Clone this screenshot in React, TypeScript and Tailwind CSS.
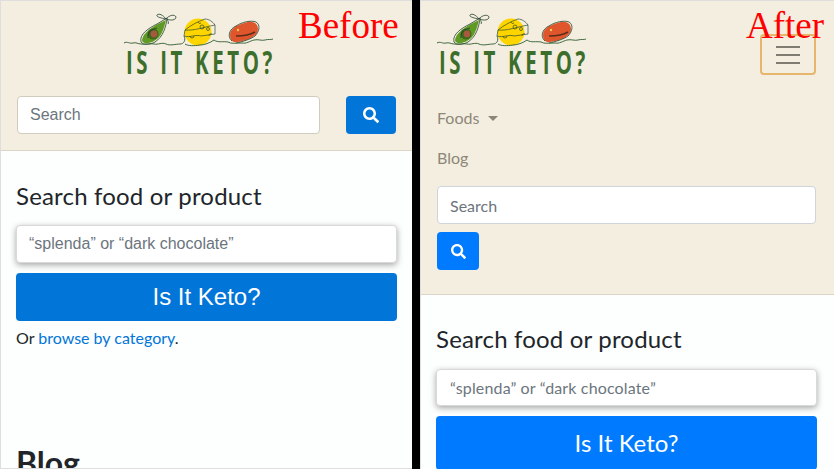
import { FaSearch } from "react-icons/fa";

const Logo = () => {
    return (
        <svg width="152" height="72" viewBox="0 0 152 72" className="block" fill="none">
            {/* avocado */}
            <path d="M18 27 C19 20 27 15 34 11 L42 7 C40 15 38 24 30 28 C25 31 18 31 18 27 Z" fill="#5f9a24" />
            <circle cx="29" cy="21" r="5.5" fill="#3b6a1c" />
            <circle cx="30" cy="21" r="3.4" fill="#a8583c" />
            <path d="M17 29 C15 21 25 15 33 11 L43 5 C42 14 39 24 31 29 C26 32 19 32 17 29 Z" stroke="#22402a" strokeWidth="0.8" />
            <path d="M24 25 C23 19 28 16 33 15 M42 6 C37 5 32 4 33 2 C35 0 39 2 42 6 C45 2 51 1 52 4 C52 7 47 8 43 6 C44 8 45 10 44 11" stroke="#22402a" strokeWidth="0.8" />
            {/* cheese */}
            <circle cx="74" cy="19" r="13.5" fill="#ffd500" />
            <path d="M61 17 L60 23 C66 25 72 21 77 23 L91 21 L91 12 C89 9 85 6 81 6 C75 8 67 12 61 17 Z M61 17 C70 18 80 14 91 12" stroke="#2c4a2c" strokeWidth="0.7" />
            <circle cx="78" cy="14" r="2" stroke="#2c4a2c" strokeWidth="0.7" />
            <circle cx="84" cy="16" r="1.5" stroke="#2c4a2c" strokeWidth="0.7" />
            <path d="M66 23 a2 2 0 0 0 4 0 M85 23 a2 2 0 0 1 3 -2 M74 9 a2 2 0 0 0 3 1" stroke="#2c4a2c" strokeWidth="0.7" />
            {/* steak */}
            <path d="M106 22 C106 14 116 11 124 9 C130 8 134 11 134 16 C134 24 122 28 113 29 C108 30 106 26 106 22 Z" fill="#e0562c" />
            <path d="M112 23 C118 23 126 22 131 19" stroke="#5a2d1a" strokeWidth="1.6" />
            <circle cx="114" cy="17" r="1.2" fill="#f5c84a" />
            <path d="M108 28 C103 24 105 16 112 13 C118 9 127 7 132 9 C137 12 135 19 131 23 C127 26 118 29 112 30" stroke="#22402a" strokeWidth="0.8" />
            {/* line under the food */}
            <path d="M0 30 C3 28 6 31 9 30 C12 29 14 31 17 31 C21 32 26 30 30 31 C34 32 38 29 42 31 C46 33 52 31 56 31 C60 31 62 27 60 23 M90 27 C94 30 99 28 104 29 C107 31 112 30 118 30 C122 31 126 28 130 27 C134 26 138 28 141 27 C144 26 147 27 149 26" stroke="#2c5a2c" strokeWidth="0.9" />
            <path d="M61 31 C64 33 70 33 76 32 C80 32 86 30 90 27" stroke="#2c5a2c" strokeWidth="0.9" />
            <g transform="translate(2 61) scale(0.62 1)">
                <text x="0" y="0" textLength="236" lengthAdjust="spacing" fill="#3d6e2b" fontFamily="'Open Sans', sans-serif" fontWeight="700" fontSize="33">IS IT KETO?</text>
            </g>
        </svg>
    );
};

const App = () => {
    return (
        <div className="flex w-[834px] h-[469px] overflow-hidden bg-black font-['Lato',sans-serif]">
            {/* before */}
            <div className="relative w-[412px] h-full overflow-hidden bg-[#fcfffe] border border-r-0 border-[#dedede]">
                <div className="absolute left-[297px] top-[3px] text-[37px] leading-[44px] text-[#ff0000] font-['Liberation_Serif',serif]">Before</div>
                <header className="h-[150px] bg-[#f4eee1] border-b border-[#dcd6c9]">
                    <div className="flex justify-center pt-[12px] pr-[13px]">
                        <Logo />
                    </div>
                    <div className="flex justify-between pl-[16px] pr-[16px] mt-[11px]">
                        <div className="w-[303px] h-[38px] flex items-center px-[12px] bg-white border border-[#d1cbbd] rounded-[4px] text-[16px] text-[#6c757d] font-['Liberation_Sans',sans-serif]">Search</div>
                        <div className="w-[50px] h-[38px] flex items-center justify-center bg-[#0275d8] rounded-[4px]">
                            <FaSearch size={16} color="#fff" />
                        </div>
                    </div>
                </header>
                <main className="px-[15px]">
                    <h2 className="mt-[28px] text-[24px] leading-[34px] tracking-[0.18px] text-[#212529]">Search food or product</h2>
                    <div className="mt-[12px] h-[38px] flex items-center px-[12px] bg-white border border-[#d9d9d9] rounded-[4px] shadow-[0_2px_6px_rgba(0,0,0,0.35)] text-[16px] text-[#6c757d] font-['Liberation_Sans',sans-serif]">“splenda” or “dark chocolate”</div>
                    <div className="mt-[10px] h-[48px] flex items-center justify-center bg-[#0275d8] rounded-[4px] text-[24px] text-white font-['Liberation_Sans',sans-serif]">Is It Keto?</div>
                    <p className="mt-[5px] text-[16px] leading-[24px] text-[#212529]">Or <a className="text-[#0275d8]">browse by category</a>.</p>
                    <h2 className="mt-[93px] text-[32px] leading-[40px] font-bold text-[#212529]">Blog</h2>
                </main>
            </div>
            <div className="w-[8px] shrink-0" />
            {/* after */}
            <div className="relative w-[414px] h-full overflow-hidden bg-[#fcfffe] border-l border-t border-[#dedede]">
                <header className="h-[294px] bg-[#f4eee1] border-b border-[#dcd6c9] pl-[16px] pr-[18px] relative">
                    <div className="pt-[12px]">
                        <Logo />
                    </div>
                    <div className="absolute right-[18px] top-[33px] w-[56px] h-[41px] border-2 border-[#e5b66b] rounded-[4px] flex flex-col items-center justify-center gap-[6px]">
                        <span className="w-[24px] h-[2px] bg-[#7f7b70]" />
                        <span className="w-[24px] h-[2px] bg-[#7f7b70]" />
                        <span className="w-[24px] h-[2px] bg-[#7f7b70]" />
                    </div>
                    <nav className="mt-[13px] text-[16px] leading-[24px] text-[#8c8778]">
                        <div className="flex items-center h-[40px]">
                            Foods
                            <span className="ml-[9px] mt-[1px] w-0 h-0 border-x-[5px] border-x-transparent border-t-[5px] border-t-[#8c8778]" />
                        </div>
                        <div className="flex items-center h-[40px]">Blog</div>
                    </nav>
                    <div className="mt-[8px] h-[38px] flex items-center pt-px px-[12px] bg-white border border-[#ced4da] rounded-[4px] text-[16px] text-[#6c757d]">Search</div>
                    <div className="mt-[8px] w-[42px] h-[38px] flex items-center justify-center bg-[#007bff] rounded-[4px]">
                        <FaSearch size={15} color="#fff" />
                    </div>
                </header>
                <main className="pl-[15px] pr-[17px]">
                    <h2 className="mt-[27px] text-[24px] leading-[34px] tracking-[0.18px] text-[#212529]">Search food or product</h2>
                    <div className="mt-[13px] h-[37px] flex items-center pt-px px-[13px] bg-white border border-[#d9d9d9] rounded-[4px] shadow-[0_2px_6px_rgba(0,0,0,0.35)] text-[16px] tracking-[0.15px] text-[#6c757d]">“splenda” or “dark chocolate”</div>
                    <div className="mt-[10px] h-[54px] flex items-center justify-center bg-[#007bff] rounded-[4px] text-[24px] text-white">Is It Keto?</div>
                </main>
                <div className="absolute left-[325px] top-[3px] text-[37px] leading-[44px] text-[#ff0000] font-['Liberation_Serif',serif]">After</div>
            </div>
        </div>
    );
};

export default App;
